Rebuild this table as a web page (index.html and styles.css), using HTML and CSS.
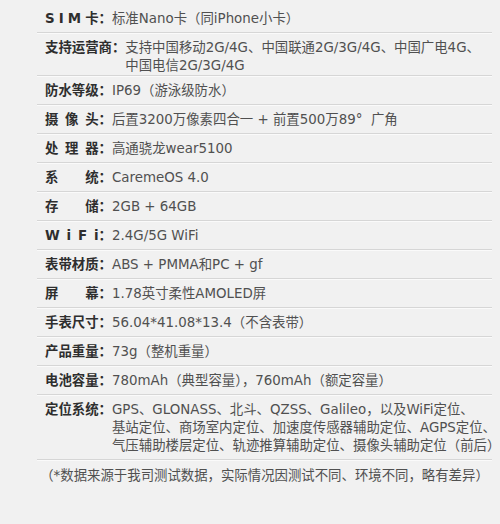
FILE: index.html
```html
<!DOCTYPE html>
<html>
<head>
    <meta charset="utf-8">
    <title>产品参数</title>
    <link rel="stylesheet" href="styles.css">
</head>
<body>
    <div class="specs">
        <div class="row">
            <span class="label"><span class="name">S I M 卡</span>：</span>
            <span class="value">标准Nano卡（同iPhone小卡）</span>
        </div>
        <div class="row tight">
            <span class="label">支持运营商：</span>
            <span class="value lines">支持中国移动2G/4G、中国联通2G/3G/4G、中国广电4G、<br>中国电信2G/3G/4G</span>
        </div>
        <div class="row">
            <span class="label"><span class="name">防水等级</span>：</span>
            <span class="value">IP69（游泳级防水）</span>
        </div>
        <div class="row">
            <span class="label"><span class="name">摄像头</span>：</span>
            <span class="value">后置3200万像素四合一 + 前置500万89°&nbsp;&nbsp;广角</span>
        </div>
        <div class="row">
            <span class="label"><span class="name">处理器</span>：</span>
            <span class="value">高通骁龙wear5100</span>
        </div>
        <div class="row">
            <span class="label"><span class="name">系统</span>：</span>
            <span class="value">CaremeOS 4.0</span>
        </div>
        <div class="row">
            <span class="label"><span class="name">存储</span>：</span>
            <span class="value">2GB + 64GB</span>
        </div>
        <div class="row">
            <span class="label"><span class="name">W i F i</span>：</span>
            <span class="value">2.4G/5G WiFi</span>
        </div>
        <div class="row">
            <span class="label"><span class="name">表带材质</span>：</span>
            <span class="value">ABS + PMMA和PC + gf</span>
        </div>
        <div class="row">
            <span class="label"><span class="name">屏幕</span>：</span>
            <span class="value">1.78英寸柔性AMOLED屏</span>
        </div>
        <div class="row">
            <span class="label"><span class="name">手表尺寸</span>：</span>
            <span class="value">56.04*41.08*13.4（不含表带）</span>
        </div>
        <div class="row">
            <span class="label"><span class="name">产品重量</span>：</span>
            <span class="value">73g（整机重量）</span>
        </div>
        <div class="row">
            <span class="label"><span class="name">电池容量</span>：</span>
            <span class="value">780mAh（典型容量），760mAh（额定容量）</span>
        </div>
        <div class="row">
            <span class="label"><span class="name">定位系统</span>：</span>
            <span class="value lines">GPS、GLONASS、北斗、QZSS、Galileo，以及WiFi定位、<br>基站定位、商场室内定位、加速度传感器辅助定位、AGPS定位、<br>气压辅助楼层定位、轨迹推算辅助定位、摄像头辅助定位（前后）</span>
        </div>
        <p class="note">（*数据来源于我司测试数据，实际情况因测试不同、环境不同，略有差异）</p>
    </div>
</body>
</html>
```

FILE: styles.css
```css
body {
    margin: 0;
    background: #f1f1f1;
    font-family: "DejaVu Sans", "Noto Sans CJK SC", sans-serif;
    font-size: 13.4px;
}
.specs {
    padding: 4px 8px 0 37px;
}
.row {
    display: flex;
    padding: 6px 0 4px 8px;
    line-height: 18px;
    border-bottom: 1px solid #d6d6d6;
    box-shadow: 0 1px 0 #fafafa;
}
.row.tight {
    padding-bottom: 0;
}
.label {
    flex: none;
    font-weight: bold;
    color: #2e2e2e;
    white-space: nowrap;
}
.label .name {
    display: inline-block;
    width: 4em;
    text-align: justify;
    text-align-last: justify;
    word-spacing: -2px;
    vertical-align: top;
}
.value {
    flex: 1;
    color: #505050;
}
.value.lines {
    white-space: nowrap;
}
.note {
    margin: 7px 0 0;
    text-align: center;
    color: #505050;
    line-height: 18px;
}
```
